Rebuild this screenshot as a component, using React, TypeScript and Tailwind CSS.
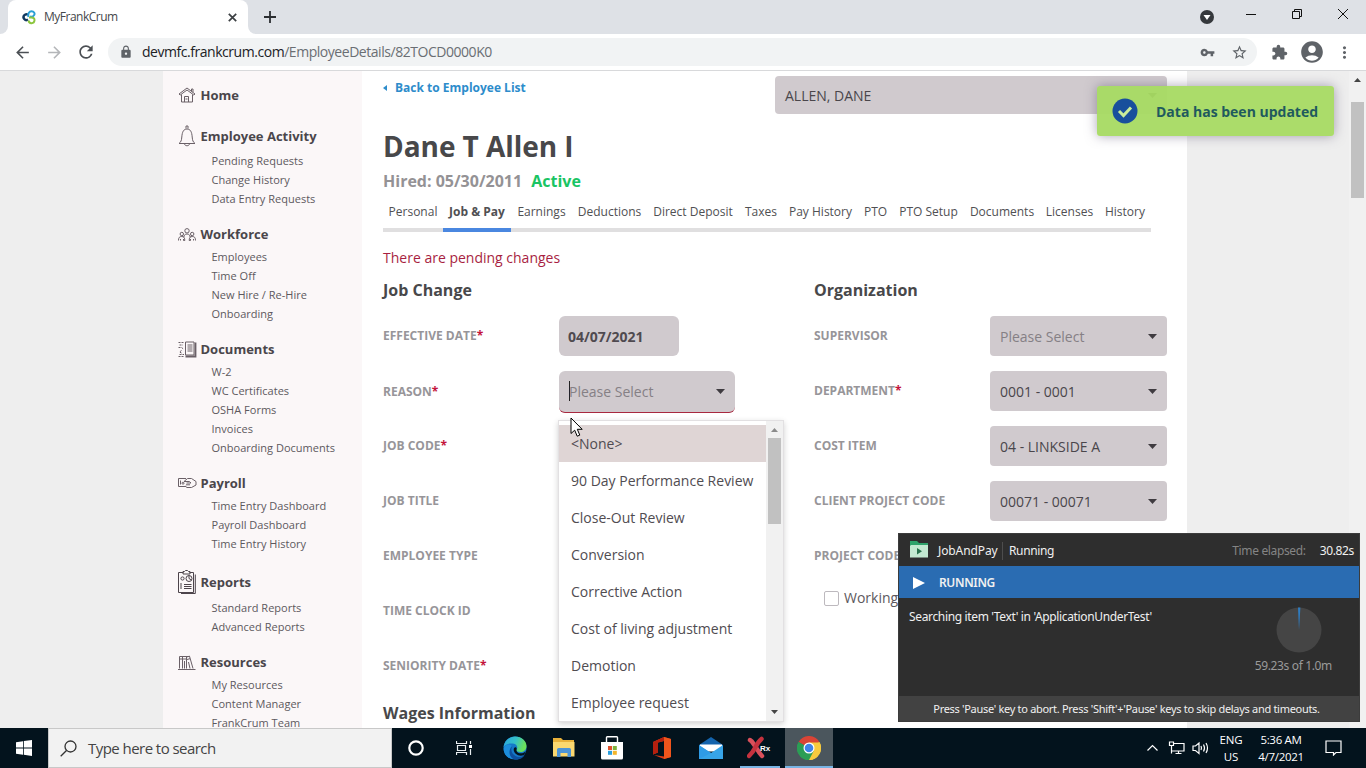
import React from "react";
import {
  MdArrowBack,
  MdArrowForward,
  MdRefresh,
  MdLock,
  MdVpnKey,
  MdStarBorder,
  MdExtension,
  MdMoreVert,
  MdAccountCircle,
} from "react-icons/md";

const stroke = { fill: "none", stroke: "#6a6067", strokeWidth: 1 } as const;

const HomeIcon = () => (
  <svg width="18" height="16" viewBox="0 0 18 16" {...stroke}>
    <path d="M1 7 9 1l8 6-1.2 1L9 3 2.200 8z" />
    <path d="M3.500 7.500v7.500h11V7.500M13.500 4V2h1.500v3.200M6.500 15V9.500h4V15M7.500 12h2" />
  </svg>
);
const BellIcon = () => (
  <svg width="18" height="22" viewBox="0 0 18 22" {...stroke}>
    <path d="M8 3.500V1h2v2.500M1 18.500c2-1.500 2.500-3 2.800-6.500C4.200 7 5.500 4 9 4s4.800 3 5.200 8c.3 3.500.8 5 2.800 6.500zM1 18.500h16M6.500 19c.5 2.300 4.500 2.300 5 0" />
  </svg>
);
const PeopleIcon = () => (
  <svg width="18" height="13" viewBox="0 0 18 13" {...stroke}>
    <circle cx="9" cy="2.800" r="2.200" />
    <path d="M5.800 9.500C6 7 7 6 9 6s3 1 3.200 3.500" />
    <circle cx="3.800" cy="6" r="1.700" />
    <circle cx="14.200" cy="6" r="1.700" />
    <path d="M.5 12.500c0-3 1-4 3.300-4s3 1.500 3 4H5.500V11M17.500 12.500c0-3-1-4-3.300-4s-3 1.500-3 4h1.300V11M2.500 12.500V11M15.500 12.500V11" />
  </svg>
);
const DocsIcon = () => (
  <svg width="19" height="17" viewBox="0 0 19 17" {...stroke}>
    <path d="M7.500 1h8.500v13H7.500zM9.500 4h5M9.500 6h5M9.500 8h5M9.500 10h5" />
    <path d="M7.500 15.500h10V1.500" strokeWidth="1.800" />
    <path d="M.5 1.500h5M1.500 4H5M.5 6.500h3L5.500 8M.5 15.500h6M1.500 13.500H6M3.500 9.500l-2 1.500 2 1" strokeDasharray="2 1" />
  </svg>
);
const PayIcon = () => (
  <svg width="19" height="12" viewBox="0 0 19 12" {...stroke}>
    <path d="M.5 1.500h7.500M.5 1.500v8h7M2.500 3.500v4" />
    <path d="M6 4.500 9.500 1.500h4L18 4.500v3.500l-4.500 2.500H9L7 9M6 4.500h5.500L13 6H8.500M8 7.800h4" />
    <circle cx="5" cy="6.200" r="1" />
  </svg>
);
const ReportsIcon = () => (
  <svg width="18" height="24" viewBox="0 0 18 24" {...stroke} stroke="#4d444b">
    <path d="M5.500 2.500h-5v20h15v-20H11.500" />
    <path d="M17.300 4.500V23.500H3" />
    <path d="M5 1.500h1.500L7.500.5h2l1 1H12v2.500H5z" />
    <circle cx="4.500" cy="8.500" r="1.600" />
    <circle cx="11" cy="8.500" r="3" />
    <path d="M11 5.500v3l2.500 1.500M3 13v6M6 14.500h7.500M6 16.500h7.500M6 18.500h7.500" />
  </svg>
);
const BooksIcon = () => (
  <svg width="18" height="15" viewBox="0 0 18 15" {...stroke}>
    <path d="M1.500 13.500v-12h10M4.500 1.500v12M8.500 1.500v12M1.500 4h7M8.500 2l3-.8 3.500 12.300M9 4.500l3-.8M6.500 6v7.500M10.500 7l1.500 6.500M0 14.500h17.500" />
  </svg>
);

const sections = [
  { title: "Home", icon: <HomeIcon />, head: "mt-[13px] h-[22px]", items: [] as string[] },
  { title: "Employee Activity", icon: <BellIcon />, head: "mt-[15px] h-[30px]", items: ["Pending Requests", "Change History", "Data Entry Requests"] },
  { title: "Workforce", icon: <PeopleIcon />, head: "mt-[13px] h-[26px]", items: ["Employees", "Time Off", "New Hire / Re-Hire", "Onboarding"] },
  { title: "Documents", icon: <DocsIcon />, head: "mt-[13px] h-[26px]", items: ["W-2", "WC Certificates", "OSHA Forms", "Invoices", "Onboarding Documents"] },
  { title: "Payroll", icon: <PayIcon />, head: "mt-[13px] h-[26px]", items: ["Time Entry Dashboard", "Payroll Dashboard", "Time Entry History"] },
  { title: "Reports", icon: <ReportsIcon />, head: "mt-[13px] h-[32px]", items: ["Standard Reports", "Advanced Reports"] },
  { title: "Resources", icon: <BooksIcon />, head: "mt-[13px] h-[26px]", items: ["My Resources", "Content Manager", "FrankCrum Team"] },
];

const tabs: [string, string][] = [
  ["Personal", "w-[60px]"],
  ["Job & Pay", "w-[68px]"],
  ["Earnings", "w-[61px]"],
  ["Deductions", "w-[75px]"],
  ["Direct Deposit", "w-[92px]"],
  ["Taxes", "w-[44px]"],
  ["Pay History", "w-[75px]"],
  ["PTO", "w-[35px]"],
  ["PTO Setup", "w-[71px]"],
  ["Documents", "w-[76px]"],
  ["Licenses", "w-[59px]"],
  ["History", "w-[52px]"],
];

const reasons = [
  "<None>",
  "90 Day Performance Review",
  "Close-Out Review",
  "Conversion",
  "Corrective Action",
  "Cost of living adjustment",
  "Demotion",
  "Employee request",
];

const Caret = ({ color = "#3f3b40" }: { color?: string }) => (
  <svg width="9" height="5" viewBox="0 0 9 5" className="shrink-0">
    <path d="M0 0h9L4.500 5z" fill={color} />
  </svg>
);

function Label({ text, required }: { text: string; required?: boolean }) {
  return (
    <span className="w-[176px] shrink-0 text-[12px] font-bold text-[#979599]">
      {text}
      {required && <span className="text-[#c4143c]">*</span>}
    </span>
  );
}

function Select({ value, muted }: { value: string; muted?: boolean }) {
  return (
    <div className="flex h-10 w-[177px] items-center justify-between rounded-[4px] bg-[#d0cace] pl-[10px] pr-[10px] pt-[2px] text-[14px]">
      <span className={muted ? "text-[#858085]" : "text-[#4a464b]"}>{value}</span>
      <Caret />
    </div>
  );
}

function Browser() {
  return (
    <>
      <div className="flex h-[34px] shrink-0 items-end bg-[#dee1e6]">
        <div className="h-2 w-2 bg-white">
          <div className="h-2 w-2 rounded-br-lg bg-[#dee1e6]" />
        </div>
        <div className="flex h-[34px] w-[240px] items-center rounded-t-lg bg-white pl-[13px] pr-[11px]">
          <svg width="15" height="15" viewBox="0 0 15 15" fill="none" className="mt-px">
            <path d="M7 4.700A2.900 2.900 0 1 0 7 9.600" stroke="#12395f" strokeWidth="2.400" />
            <path d="M7.500 7c-1-3.500 1-5.700 3-5.700 2.500 0 3.500 2 2.800 3.500-.8 1.700-3 2-4.300 1.700" stroke="#2a9fd6" strokeWidth="2" />
            <path d="M8 7.500h2.500c2 0 3.200 1.200 3 3-.2 1.700-1.500 2.800-3.200 2.700-1.500-.1-2.500-1-2.800-2.700" stroke="#8cc63f" strokeWidth="2" />
          </svg>
          <span className="ml-[8px] flex-1 text-[12px] tracking-[-0.5px] text-[#45484c]">MyFrankCrum</span>
          <svg width="9" height="9" viewBox="0 0 9 9" stroke="#3c4043" strokeWidth="1.700">
            <path d="m.8.800 7.400 7.400M8.200.800.8 8.200" />
          </svg>
        </div>
        <div className="h-2 w-2 bg-white">
          <div className="h-2 w-2 rounded-bl-lg bg-[#dee1e6]" />
        </div>
        <svg width="14" height="14" viewBox="0 0 14 14" stroke="#2b2e31" strokeWidth="1.800" className="mb-[10px] ml-[7px]">
          <path d="M7 1v12M1 7h12" />
        </svg>
        <div className="flex-1" />
        <svg width="14" height="14" viewBox="0 0 14 14" className="mb-[10px]">
          <circle cx="7" cy="7" r="7" fill="#35383c" />
          <path d="M3.500 5h7L7 10z" fill="#fff" />
        </svg>
        <svg width="138" height="34" viewBox="0 0 138 34" fill="none" stroke="#111" strokeWidth="1" className="ml-[14px]">
          <path d="M18 14.500h10" />
          <path d="M64.500 11.500h7v7h-7zM66.500 11.500v-2h7v7h-2" />
          <path d="m110 9 10 10M120 9l-10 10" />
        </svg>
      </div>
      <div className="flex h-9 shrink-0 items-center bg-white pl-[13px] pr-[12px] text-[#5f6368]">
        <MdArrowBack size={19} className="text-[#4b4f54]" />
        <MdArrowForward size={19} className="ml-[13px] text-[#b4b6b9]" />
        <MdRefresh size={20} className="ml-[12px] text-[#4b4f54]" />
        <div className="ml-[12px] flex h-7 w-[1149px] items-center rounded-full bg-[#f1f3f4] pl-[11px] pr-[9px]">
          <MdLock size={14} />
          <span className="mb-px ml-[9px] flex-1 text-[14px] tracking-[-0.46px] text-[#6a6e73]">
            <span className="text-[#202124]">devmfc.frankcrum.com</span>/EmployeeDetails/82TOCD0000K0
          </span>
          <MdVpnKey size={15} />
          <MdStarBorder size={17} className="ml-[16px]" />
        </div>
        <MdExtension size={17} className="ml-[14px]" />
        <MdAccountCircle size={26} className="ml-[11px]" />
        <MdMoreVert size={19} className="ml-[10px] shrink-0" />
      </div>
      <div className="h-px shrink-0 bg-[#d8d9db]" />
    </>
  );
}

function Sidebar() {
  return (
    <div className="w-[199px] shrink-0 bg-[#fbf7f8] pl-[15px]">
      {sections.map((s) => (
        <div key={s.title}>
          <div className={"flex items-center " + s.head}>
            <span className="flex w-[22.500px] justify-start">{s.icon}</span>
            <span className="pt-[2px] text-[13px] font-bold text-[#4a464b]">{s.title}</span>
          </div>
          {s.items.map((i) => (
            <div key={i} className="h-[19px] pl-[33.500px] text-[11px] leading-[20px] tracking-[0.01px] text-[#5d595e]">
              {i}
            </div>
          ))}
        </div>
      ))}
    </div>
  );
}

function ReasonMenu() {
  return (
    <div className="absolute left-[-1px] top-[49px] z-10 flex h-[302px] w-[226px] border border-[#e2e0e2] bg-white shadow-[0_2px_6px_rgba(0,0,0,0.18)]">
      <div className="flex-1 pt-[4px]">
        {reasons.map((r, i) => (
          <div key={r} className={"flex h-[37px] items-center pl-[12px] text-[14px] text-[#504c51] " + (i === 0 ? "bg-[#dfd5d5]" : "")}>
            {r}
          </div>
        ))}
      </div>
      <div className="flex w-[17px] flex-col items-center bg-[#f1f1f1] pb-[7px] pt-[7px]">
        <svg width="7" height="4" viewBox="0 0 7 4">
          <path d="M0 4h7L3.500 0z" fill="#8b8b8b" />
        </svg>
        <div className="mt-[6px] h-[86px] w-[13px] bg-[#c1c1c1]" />
        <div className="flex-1" />
        <svg width="7" height="4" viewBox="0 0 7 4">
          <path d="M0 0h7L3.500 4z" fill="#454545" />
        </svg>
      </div>
    </div>
  );
}

function Main() {
  return (
    <div className="w-[825px] shrink-0 bg-white pl-[21px]">
      <div className="flex h-[59px] items-start">
        <div className="flex w-[392px] items-center pt-[8px] text-[12px] font-bold leading-[18px] text-[#2d8ccb]">
          <svg width="4" height="6" viewBox="0 0 4 6" className="mr-[8px]">
            <path d="M4 0v6L0 3z" fill="#2d8ccb" />
          </svg>
          Back to Employee List
        </div>
        <div className="mt-[5px] flex h-[38px] w-[392px] items-center justify-between rounded-[4px] bg-[#d0cace] px-[10px] pt-px text-[14px] text-[#4a464b]">
          ALLEN, DANE
          <Caret />
        </div>
      </div>
      <div className="h-[34px] text-[28px] font-bold leading-[33px] tracking-[-0.05px] text-[#48484a]">Dane T Allen I</div>
      <div className="mt-[6px] h-[22px] text-[16px] font-bold leading-[22px] text-[#949295]">
        Hired: 05/30/2011 <span className="ml-[5px] text-[#19c463]">Active</span>
      </div>
      <div className="mt-[6px] flex h-[34px]">
        {tabs.map(([t, w]) => (
          <div
            key={t}
            className={
              "flex justify-center whitespace-nowrap border-b-4 pt-[4px] text-[12px] leading-[20px] text-[#505053] " +
              (t === "Job & Pay" ? "border-[#4a87e0] font-bold " : "border-[#e0dfe0] ") +
              w
            }
          >
            {t}
          </div>
        ))}
      </div>
      <div className="mt-[16px] h-[20px] text-[14px] leading-[20px] text-[#a81f42]">There are pending changes</div>
      <div className="mt-[8px] flex h-[28px] text-[16px] font-bold leading-[28px] text-[#48484a]">
        <div className="w-[431px]">Job Change</div>
        <div>Organization</div>
      </div>
      <div className="mt-[4px] flex">
        <div className="w-[431px]">
          <div className="flex h-[55px] items-center">
            <Label text="EFFECTIVE DATE" required />
            <div className="flex h-10 w-[120px] items-center rounded-[6px] bg-[#d0cace] pl-[9px] pt-px text-[14px] font-bold text-[#4f4a50]">
              04/07/2021
            </div>
          </div>
          <div className="flex h-[55px] items-center pt-[2px]">
            <Label text="REASON" required />
            <div className="relative">
              <div className="flex h-[42px] w-[176px] items-center justify-between rounded-[6px] border-b border-[#a8283f] bg-[#d0cace] pl-[10px] pr-[10px] text-[14px] text-[#858085]">
                <div className="flex items-center">
                  <div className="-mr-px h-[20px] w-px bg-[#222]" />
                  <span>Please Select</span>
                </div>
                <Caret />
              </div>
              <ReasonMenu />
            </div>
          </div>
          {["JOB CODE*", "JOB TITLE", "EMPLOYEE TYPE", "TIME CLOCK ID", "SENIORITY DATE*"].map((l) => (
            <div key={l} className="flex h-[55px] items-center">
              <Label text={l.replace("*", "")} required={l.endsWith("*")} />
            </div>
          ))}
          <div className="mt-[6px] text-[16px] font-bold leading-[28px] text-[#48484a]">Wages Information</div>
        </div>
        <div>
          <div className="flex h-[55px] items-center">
            <Label text="SUPERVISOR" />
            <Select value="Please Select" muted />
          </div>
          <div className="flex h-[55px] items-center">
            <Label text="DEPARTMENT" required />
            <Select value="0001 - 0001" />
          </div>
          <div className="flex h-[55px] items-center">
            <Label text="COST ITEM" />
            <Select value="04 - LINKSIDE A" />
          </div>
          <div className="flex h-[55px] items-center">
            <Label text="CLIENT PROJECT CODE" />
            <Select value="00071 - 00071" />
          </div>
          <div className="flex h-[55px] items-center">
            <Label text="PROJECT CODE" />
          </div>
          <div className="ml-[10px] mt-[4px] flex items-center text-[14px] text-[#5d595e]">
            <div className="mr-[5px] mt-px h-[15px] w-[15px] rounded-[2px] border border-[#bdb9be] bg-white" />
            Working
          </div>
        </div>
      </div>
    </div>
  );
}

function Toast() {
  return (
    <div className="absolute left-[1097px] top-[86px] flex h-[50px] w-[237px] items-center rounded-[3px] bg-[#a7da62]/95 pl-[15px] shadow-[0_0_12px_rgba(90,80,110,0.5)]">
      <svg width="26" height="26" viewBox="0 0 26 26">
        <circle cx="13" cy="13" r="12.500" fill="#184f9c" />
        <path d="m7 13 4.500 4.500L19 9.500" fill="none" stroke="#c9ec9b" strokeWidth="3" />
      </svg>
      <span className="ml-[18px] whitespace-nowrap text-[14px] font-bold text-[#1f5a5e]">Data has been updated</span>
    </div>
  );
}

function RunnerPanel() {
  return (
    <div className="absolute left-[898px] top-[533px] flex h-[189px] w-[462px] flex-col border border-[#3c3c3c] bg-[#2e2e2e] font-['Noto_Sans',sans-serif] text-[12px] tracking-[-0.35px] text-[#f0f0f0]">
      <div className="flex h-[32px] items-center pl-[11px] pr-[5px] pt-px">
        <svg width="18" height="17" viewBox="0 0 18 17" className="mb-[2px]">
          <path d="M0 0h7l2 2h9v14H0z" fill="#2fa36b" />
          <path d="M1 4h17v12.500H0V5z" fill="#c3e9d1" />
          <path d="M7 7v6.500l5-3.200z" fill="#27724c" />
        </svg>
        <span className="ml-[10px] w-[65px] border-r border-[#4d4d4d] tracking-[-0.1px]">JobAndPay</span>
        <span className="ml-[6px] flex-1">Running</span>
        <span className="text-[#858585]">Time elapsed:</span>
        <span className="ml-[14px]">30.82s</span>
      </div>
      <div className="flex h-[32px] items-center bg-[#2a6cb2] pl-[14px] pt-px font-semibold">
        <svg width="12" height="12" viewBox="0 0 12 12">
          <path d="M0 0v12l12-6z" fill="#fff" />
        </svg>
        <span className="ml-[14px]">RUNNING</span>
      </div>
      <div className="flex h-[98px] justify-between pl-[10px] pr-[27px]">
        <span className="pt-[10px]">Searching item 'Text' in 'ApplicationUnderTest'</span>
        <div className="flex flex-col items-center pt-[9px] text-[#9a9a9a]">
          <svg width="46" height="46" viewBox="0 0 46 46" className="ml-[12px]">
            <circle cx="23" cy="23" r="22.500" fill="#454545" />
            <path d="M23 23 22 .5h2.400z" fill="#2f7cc0" />
          </svg>
          <span className="mt-[4px]">59.23s of 1.0m</span>
        </div>
      </div>
      <div className="flex flex-1 items-center justify-center whitespace-nowrap bg-[#424242] pr-[5px] pt-[2px] text-[11px] tracking-[-0.3px]">
        Press 'Pause' key to abort. Press 'Shift'+'Pause' keys to skip delays and timeouts.
      </div>
    </div>
  );
}

function Taskbar() {
  return (
    <div className="flex h-10 shrink-0 items-center bg-[#03131d] text-white">
      <div className="flex w-12 justify-center">
        <svg width="16" height="16" viewBox="0 0 16 16" fill="#fff">
          <path d="M0 2.200 7 1.200v6.300H0zM7.800 1.100 16 0v7.500H7.800zM0 8.400h7v6.300l-7-1zM7.800 8.400H16V16l-8.200-1.200z" />
        </svg>
      </div>
      <div className="flex h-10 w-[344px] items-center border border-[#c8c8c8] bg-[#f2f2f2] pl-[11px]">
        <svg width="17" height="17" viewBox="0 0 17 17" fill="none" stroke="#333" strokeWidth="1.300">
          <circle cx="10.500" cy="6.500" r="5.500" />
          <path d="M6.500 10.500.7 16.300" />
        </svg>
        <span className="ml-[11px] text-[15px] tracking-[-0.55px] text-[#444]">Type here to search</span>
      </div>
      <div className="flex w-12 justify-center">
        <svg width="16" height="16" viewBox="0 0 16 16">
          <circle cx="8" cy="8" r="6.700" fill="none" stroke="#fff" strokeWidth="2.200" />
        </svg>
      </div>
      <div className="flex w-12 justify-center">
        <svg width="16" height="16" viewBox="0 0 16 16" fill="none" stroke="#e8edf0" strokeWidth="1.200">
          <path d="M.5 1v2.500h10V1M.5 15v-2.500h10V15M1.500 5.500h8v5h-8zM14.500 1v3M14.500 9v6" />
          <path d="M13 5h3v3h-3z" fill="#fff" stroke="none" />
        </svg>
      </div>
      <div className="flex w-[54px] justify-center">
        <svg width="24" height="24" viewBox="0 0 24 24">
          <defs>
            <linearGradient id="edgeTop" x1="0" y1="0" x2="1" y2="0.300">
              <stop offset="0" stopColor="#2aa6e0" />
              <stop offset=".55" stopColor="#35c1c9" />
              <stop offset="1" stopColor="#6be05a" />
            </linearGradient>
          </defs>
          <circle cx="12" cy="12" r="11.500" fill="#1579c8" />
          <path d="M.6 11C1.500 4.500 6.500.5 12 .5c7 0 11.500 5 11.500 9.500 0 4-3 6-6 6-2.500 0-4.500-1-4-2 1.500-2 1-6-3.500-6.500C5.500 7 2 8.500.6 11z" fill="url(#edgeTop)" />
          <path d="M9 10c-4 3-2.500 11.500 4 13-8 1-13-5-12.200-11C2 8.500 6 7.500 9 10z" fill="#1c8ddc" />
          <path d="M9.300 10c-3 5 1.500 11 7 11 2.500 0 4.500-1 5.500-2.200-2 4-6.500 5.200-9.800 4.700C5.500 22 5 13.500 9.300 10z" fill="#0d4f9e" />
          <path d="M13.700 13c-1 2 1 4.300 4 4.300 2.200 0 4-.8 5-2.300-.3 1.500-.8 2.800-1.500 3.800-5 2.500-10.500-1-10.500-5.300 0-1.500.8-2.500 2-2.300.8.200 1 1 1 1.800z" fill="#03131d" />
        </svg>
      </div>
      <div className="flex w-[44px] justify-center">
        <svg width="22" height="20" viewBox="0 0 22 20">
          <path d="M0 0h8l2 2h11v15H0z" fill="#e9b23b" />
          <path d="M0 4h21.500v14.500H0z" fill="#fbd870" />
          <path d="M4 19v-7.500q0-1.500 1.500-1.500h11q1.500 0 1.500 1.500V19h-3.500v-4h-7v4z" fill="#4d94d6" />
        </svg>
      </div>
      <div className="flex w-[52px] justify-center">
        <svg width="24" height="24" viewBox="0 0 24 24">
          <path d="M6.500 6V1.500q0-.8.800-.8h9.400q.8 0 .8.800V6" fill="none" stroke="#fff" strokeWidth="1.400" />
          <path d="M1 6h22v16q0 1.500-1.500 1.500h-19Q1 23.500 1 22z" fill="#fff" />
          <path d="M8 10h4v4H8z" fill="#e0512b" />
          <path d="M12.800 10h4v4h-4z" fill="#7eb33d" />
          <path d="M8 14.800h4v4H8z" fill="#2aa0e0" />
          <path d="M12.800 14.800h4v4h-4z" fill="#f3b52a" />
        </svg>
      </div>
      <div className="flex w-[46px] justify-center">
        <svg width="19" height="22" viewBox="0 0 19 22">
          <path d="m12 0 7 2v18l-7 2-10-4 10 1.500V4L6 5.500v10L1 17.500V5z" fill="#dd3b14" />
          <path d="m12 0 7 2v18l-7 2z" fill="#f0551c" />
          <path d="M1 5 12 0v4L6 5.500v10L1 17.500z" fill="#b5200f" />
        </svg>
      </div>
      <div className="flex w-[54px] justify-center">
        <svg width="24" height="22" viewBox="0 0 24 22">
          <path d="M0 8 12 0l12 8v3H0z" fill="#1464ad" />
          <path d="M1 7.500h22v7H1z" fill="#fff" />
          <path d="M0 8v14h24V8l-12 8z" fill="#37a4e8" />
          <path d="M0 8.500 12 16 0 22z" fill="#2f9be6" />
        </svg>
      </div>
      <div className="flex h-10 w-[47px] flex-col items-start justify-between pl-[2px]">
        <svg width="24" height="24" viewBox="0 0 24 24" className="ml-[7px] mt-[8px]" fill="none">
          <path d="M3 4c2 1 3 3 5 6s4 7 7 10" stroke="#d9505b" strokeWidth="4.500" strokeLinecap="round" />
          <path d="M14.500 3C12 5 10 8 8 12s-4 6-6 8" stroke="#c5323e" strokeWidth="4.500" strokeLinecap="round" />
          <text x="13" y="15" fontFamily="Liberation Sans" fontSize="8" fontWeight="bold" fill="#fff">Rx</text>
        </svg>
        <div className="h-[2px] w-[40px] bg-[#78b4e4]" />
      </div>
      <div className="flex h-10 w-[48px] flex-col items-center justify-between bg-[#4b565d]">
        <svg width="24" height="24" viewBox="0 0 24 24" className="mt-[8px]">
          <path d="M12 12 1.600 6A12 12 0 0 1 22.400 6z" fill="#d94436" />
          <path d="M12 12 22.400 6A12 12 0 0 1 12 24z" fill="#f7ca3e" />
          <path d="M12 12v12A12 12 0 0 1 1.600 6z" fill="#2b9d55" />
          <path d="M12 6.500h10.700A12 12 0 0 1 12 24l4.800-9.200z" fill="#f7ca3e" />
          <path d="M7.200 14.800 1.600 6A12 12 0 0 0 12 24l4.800-9.200z" fill="#2b9d55" />
          <circle cx="12" cy="12" r="5.500" fill="#fff" />
          <circle cx="12" cy="12" r="4.300" fill="#3f83ea" />
        </svg>
        <div className="h-[2px] w-full bg-[#78b4e4]" />
      </div>
      <div className="flex-1" />
      <svg width="64" height="16" viewBox="0 0 64 16" fill="none" stroke="#fff" strokeWidth="1.200">
        <path d="m1.500 10.500 5-5 5 5" />
        <path d="M27.500 3.500H38v7.500H26M29.500 13.500h6M32.500 11v2.500M23.500 2h4v3.500h-4zM25.500 5.500v8" />
        <path d="M47 6h2.500L53 3v10.500l-3.500-3H47zM55 6q1 2 0 4M57.500 4.500q2 3.500 0 7M60 3q3 5 0 10" />
      </svg>
      <div className="ml-[8px] w-[26px] text-center text-[11.500px] leading-[17px] tracking-[-0.2px]">
        ENG
        <br />
        US
      </div>
      <div className="ml-[13px] w-[48px] whitespace-nowrap text-center text-[11.500px] leading-[17px] tracking-[-0.3px]">
        5:36 AM
        <br />
        4/7/2021
      </div>
      <svg width="17" height="16" viewBox="0 0 17 16" fill="none" stroke="#fff" strokeWidth="1.200" className="ml-[20px] mr-[24px]">
        <path d="M1 1h15v11.500h-5L8.500 15v-2.500H1z" />
      </svg>
    </div>
  );
}

export default function App() {
  return (
    <div className="relative flex h-[768px] w-[1366px] flex-col overflow-hidden bg-[#eeeeee] font-['Open_Sans','Noto_Sans',sans-serif]">
      <Browser />
      <div className="flex h-[657px] shrink-0 overflow-hidden pl-[163px]">
        <Sidebar />
        <Main />
        <div className="flex-1" />
        <div className="flex w-[17px] flex-col items-center bg-[#f1f1f1] pt-[7px]">
          <svg width="7" height="4" viewBox="0 0 7 4">
            <path d="M0 4h7L3.500 0z" fill="#454545" />
          </svg>
          <div className="mt-[20px] h-[96px] w-[13px] bg-[#c1c1c1]" />
        </div>
      </div>
      <Taskbar />
      <Toast />
      <RunnerPanel />
      <svg width="14" height="21" viewBox="0 0 14 21" className="absolute left-[570px] top-[417px] z-20">
        <path d="M1 1v15.500l3.700-3.300 2.500 6 2.600-1.100-2.500-5.800h4.900z" fill="#fff" stroke="#000" />
      </svg>
    </div>
  );
}
